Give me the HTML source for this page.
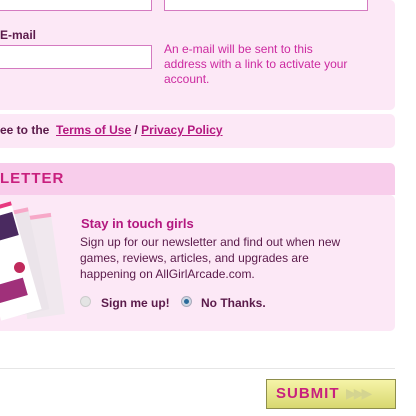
<!DOCTYPE html>
<html><head><style>
body{margin:0;width:416px;height:416px;background:#fff;position:relative;overflow:hidden;font-family:"Liberation Sans",Arial,sans-serif;}
.a{position:absolute}
.panel{background:#fce8f6;border-radius:0 5px 5px 0}
input{position:absolute;background:#fff;border:1px solid #d47ac0;margin:0;padding:0;box-sizing:border-box}
.b{font-weight:bold;font-size:12px;color:#5a1a4a}
.pk{color:#cc2aa0;font-size:12px;line-height:15px}
a{color:#b3187f;font-weight:bold}
</style></head><body>
<div class="a panel" style="left:0;top:0;width:395px;height:110px"></div>
<input style="left:-2px;top:-4px;width:154px;height:15px">
<input style="left:164px;top:-4px;width:204px;height:15px">
<div class="a b" style="left:0;top:28px">E-mail</div>
<input style="left:-2px;top:45px;width:154px;height:24px">
<div class="a pk" style="left:164px;top:42px;width:188px">An e-mail will be sent to this address with a link to activate your account.</div>
<div class="a panel" style="left:0;top:114px;width:395px;height:34px"></div>
<div class="a b" style="left:0;top:123px">ee to the&nbsp; <a style="text-decoration:underline">Terms of Use</a> / <a style="text-decoration:underline">Privacy Policy</a></div>
<div class="a" style="left:0;top:163px;width:395px;height:32px;background:#f8cdeb;border-radius:0 5px 0 0"></div>
<div class="a" style="left:0;top:170px;font-weight:bold;font-size:15px;color:#c8207e;letter-spacing:1px">LETTER</div>
<div class="a panel" style="left:0;top:195px;width:395px;height:136px"></div>
<div class="a" style="left:20px;top:215px;width:38px;height:98px;background:#f0e8ee;transform:rotate(-8deg);border-top:4px solid #f7a8c8"></div>
<div class="a" style="left:3px;top:210px;width:36px;height:100px;background:#ebe4ea;transform:rotate(-12deg);border-top:4px solid #f7a8c8"></div>
<div class="a" style="left:-15px;top:205px;width:42px;height:108px;background:#fff;transform:rotate(-16deg);border-top:4px solid #e83a80"></div>
<div class="a" style="left:-10px;top:215px;width:26px;height:24px;background:#4a2a60;transform:rotate(-16deg)"></div>
<div class="a" style="left:-8px;top:282px;width:34px;height:18px;background:#a0307a;transform:rotate(-16deg)"></div>
<div class="a" style="left:14px;top:262px;width:11px;height:11px;background:#c02a5c;border-radius:50%"></div>
<div class="a" style="left:81px;top:216px;font-weight:bold;font-size:13px;color:#b3187f">Stay in touch girls</div>
<div class="a" style="left:80px;top:234px;width:272px;font-size:12px;line-height:16px;color:#5a1a4a">Sign up for our newsletter and find out when new games, reviews, articles, and upgrades are happening on AllGirlArcade.com.</div>
<div class="a" style="left:80px;top:296px;width:11px;height:11px;border-radius:50%;background:#e4e4e4;border:1px solid #ccc;box-sizing:border-box"></div>
<div class="a b" style="left:101px;top:296px">Sign me up!</div>
<div class="a" style="left:181px;top:296px;width:11px;height:11px;border-radius:50%;background:#cfd8e4;border:1px solid #aab;box-sizing:border-box"><div style="margin:2px;width:5px;height:5px;border-radius:50%;background:#2a6a9a"></div></div>
<div class="a b" style="left:201px;top:296px">No Thanks.</div>
<div class="a" style="left:0;top:368px;width:395px;height:1px;background:#e6e6e6"></div>
<div class="a" style="left:266px;top:379px;width:128px;height:28px;background:linear-gradient(#f6f4a8,#d8d870);border:1px solid #8e8e4c"></div>
<div class="a" style="left:276px;top:385px;font-weight:bold;font-size:15px;color:#c8207e;letter-spacing:1px">SUBMIT</div>
<div class="a" style="left:346px;top:385px;font-size:14px;color:#d4d490;letter-spacing:-3px">▶▶▶</div>
</body></html>
